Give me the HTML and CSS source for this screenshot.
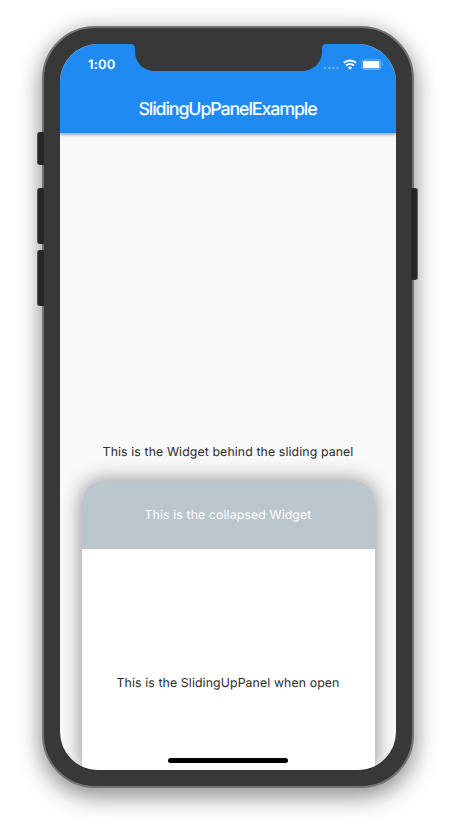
FILE: index.html
```html
<!DOCTYPE html>
<html lang="en">
<head>
<meta charset="utf-8">
<title>SlidingUpPanelExample</title>
<link rel="stylesheet" href="styles.css">
</head>
<body>
<main class="phone">
  <i class="key key-mute"></i>
  <i class="key key-up"></i>
  <i class="key key-down"></i>
  <i class="key key-power"></i>
  <div class="screen">
    <header class="appbar">
      <div class="status">
        <span class="time">1:00</span>
        <svg class="indicators" width="62" height="14" viewBox="0 0 62 14">
          <g fill="#fff" fill-opacity=".3">
            <circle cx="3" cy="10" r="1.35"/><circle cx="7.2" cy="10" r="1.35"/><circle cx="11.4" cy="10" r="1.35"/><circle cx="15.5" cy="10" r="1.35"/>
          </g>
          <g fill="none" stroke="#fff" stroke-width="2">
            <path d="M21.9 4.8a9 9 0 0 1 12.2 0"/>
            <path d="M24.1 7.5a5.7 5.7 0 0 1 7.8 0"/>
          </g>
          <path d="M25.9 9.5a3 3 0 0 1 4.2 0L28 11.7z" fill="#fff"/>
          <rect x="39.9" y="1.9" width="18.8" height="9.6" rx="2.5" fill="none" stroke="#fff" stroke-opacity=".4" stroke-width=".9"/>
          <rect x="41.1" y="3.1" width="16.3" height="7.2" rx="1" fill="#fff"/>
          <path d="M60 5.1a1.7 1.7 0 0 1 0 3z" fill="#fff" fill-opacity=".45"/>
        </svg>
      </div>
      <h1 class="title">SlidingUpPanelExample</h1>
    </header>
    <section class="body">
      <p class="behind">This is the Widget behind the sliding panel</p>
      <div class="panel">
        <div class="collapsed">This is the collapsed Widget</div>
        <p class="open">This is the SlidingUpPanel when open</p>
      </div>
    </section>
    <svg class="notch" width="196" height="27" viewBox="0 0 196 27">
      <path d="M0 0H196C193 0 192 1.5 192 4.5V7C192 18 184 27 172 27H25C13 27 5 18 5 7V4.5C5 1.5 4 0 0 0Z" fill="#383838"/>
    </svg>
    <i class="home"></i>
  </div>
</main>
</body>
</html>
```
FILE: styles.css
```css
* { box-sizing: border-box; }
body {
  margin: 0;
  height: 830px;
  overflow: hidden;
  background: #fff;
  font-family: Inter, "Liberation Sans", sans-serif;
  text-rendering: geometricPrecision;
}
.phone {
  position: relative;
  width: 372px;
  height: 762px;
  margin: 26px 42px;
  padding: 16px;
  border: 2px solid #747474;
  border-radius: 53px;
  background: #383838;
  box-shadow: 0 9px 24px rgba(0, 0, 0, .4), 0 0 22px rgba(0, 0, 0, .12);
}
.key {
  position: absolute;
  left: -7px;
  width: 7px;
  background: #262626;
  border-left: 1px solid #555;
  border-radius: 3px 1px 1px 3px;
}
.key-mute { top: 104px; height: 33px; }
.key-up { top: 160px; height: 56px; }
.key-down { top: 222px; height: 56px; }
.key-power {
  left: auto;
  right: -6px;
  top: 160px;
  height: 92px;
  border-left: 0;
  border-right: 1px solid #666;
  border-radius: 1px 3px 3px 1px;
}
.screen {
  position: relative;
  display: flex;
  flex-direction: column;
  width: 336px;
  height: 726px;
  overflow: hidden;
  border-radius: 38px;
  background: #f9f9f9;
}
.appbar {
  flex: none;
  height: 89px;
  background: #1f8bf2;
  box-shadow: 0 1px 4px rgba(0, 0, 0, .5);
  color: #fff;
  z-index: 1;
}
.status {
  display: flex;
  justify-content: space-between;
  align-items: center;
  height: 41px;
  padding: 0 12px 0 28px;
}
.time { font-size: 13px; font-weight: 600; letter-spacing: .15px; }
.title {
  margin: 13px 0 0;
  font-size: 17.8px;
  line-height: 24px;
  font-weight: 450;
  letter-spacing: -1.1px;
  text-align: center;
  text-indent: -1px;
  white-space: nowrap;
}
.body {
  flex: 1;
  display: flex;
  flex-direction: column;
  justify-content: flex-end;
}
.behind, .collapsed, .open {
  margin: 0;
  font-size: 12.3px;
  line-height: 16px;
  letter-spacing: .11px;
  text-align: center;
  white-space: nowrap;
  color: #2b2b2b;
}
.behind { margin-bottom: 21px; }
.panel {
  height: 289px;
  margin: 0 21.5px 0 21.5px;
  border-radius: 21px 21px 0 0;
  background: #fff;
  box-shadow: 0 0 20px rgba(0, 0, 0, .46);
}
.panel .collapsed {
  height: 68px;
  border-radius: 21px 21px 0 0;
  background: #bac5cc;
  color: #fff;
  line-height: 68px;
}
.open { margin-top: 126px; }
.notch {
  position: absolute;
  left: 70px;
  top: 0;
  z-index: 2;
}
.home {
  position: absolute;
  left: 108px;
  bottom: 7px;
  width: 120px;
  height: 5px;
  border-radius: 3px;
  background: #000;
}
```
